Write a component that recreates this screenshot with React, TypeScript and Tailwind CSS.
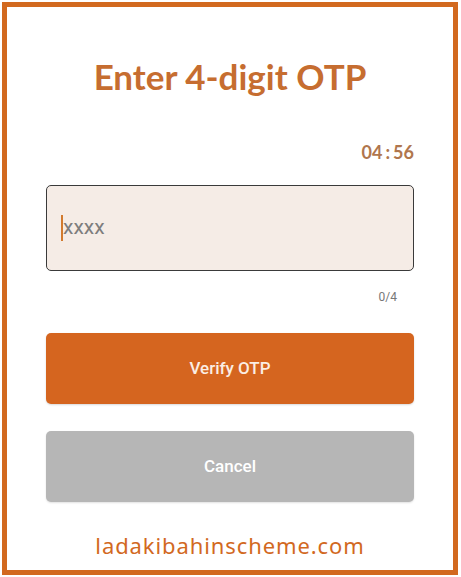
export default function App() {
  return (
    <div className="h-[577px] w-[461px] bg-white p-[2px]">
      <div className="flex h-[573px] w-[456px] flex-col border-[5px] border-[#d2691f] px-[39px]">
        <h1 className="mt-[48px] text-center font-['Lato',sans-serif] text-[35px] font-bold leading-[42px] text-[#c66d30]">
          Enter 4-digit OTP
        </h1>
        <div className="mt-[45px] flex justify-end">
          <span className="font-['Lato',sans-serif] text-[18px] font-bold leading-[20px] text-[#b0764d]">
            04<span className="px-[3px]">:</span>56
          </span>
        </div>
        <div className="mt-[23px] flex h-[86px] items-center rounded-[5px] border-[1.5px] border-[#3a3a3a] bg-[#f5ece6] px-[14px]">
          <span className="h-[26px] w-[2px] bg-[#d27a2e]" />
          <span className="font-['Roboto',sans-serif] text-[21px] text-[#7d7d7d]">xxxx</span>
        </div>
        <div className="mt-[17px] flex justify-end pr-[17px]">
          <span className="font-['Roboto',sans-serif] text-[12px] text-[#777]">0/4</span>
        </div>
        <button className="mt-[27px] flex h-[71px] items-center justify-center rounded-[5px] bg-[#d5651f] font-['Roboto',sans-serif] text-[17px] font-medium text-[#fbeee4] shadow-[0_1px_2px_rgba(0,0,0,0.15)]">
          Verify OTP
        </button>
        <button className="mt-[27px] flex h-[71px] items-center justify-center rounded-[5px] bg-[#b6b6b6] font-['Roboto',sans-serif] text-[17px] font-medium text-white shadow-[0_1px_2px_rgba(0,0,0,0.12)]">
          Cancel
        </button>
        <p className="mt-[29px] text-center font-['Noto_Sans',sans-serif] text-[22px] leading-[28px] tracking-[0.9px] text-[#d2691f]">
          ladakibahinscheme.com
        </p>
      </div>
    </div>
  );
}
